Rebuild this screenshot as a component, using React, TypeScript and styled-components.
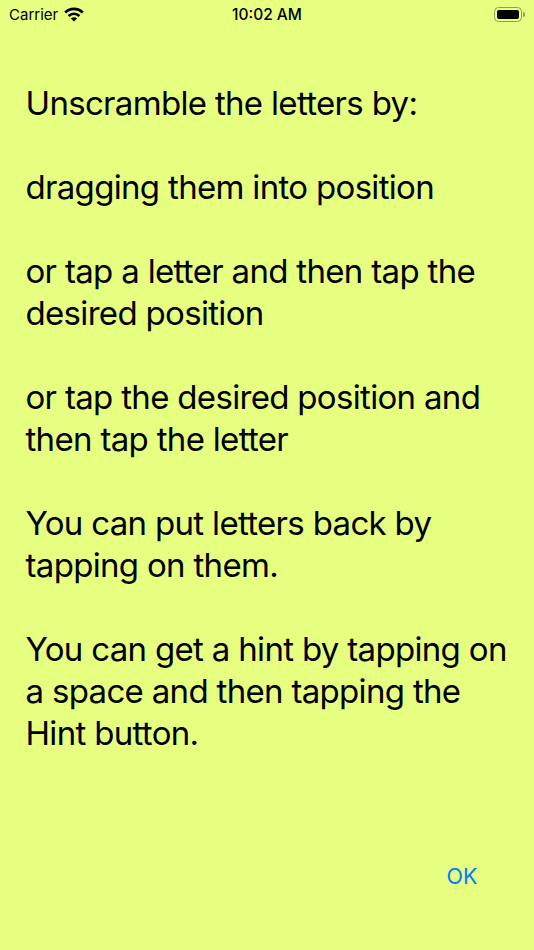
import styled, { createGlobalStyle } from "styled-components";

const GlobalStyle = createGlobalStyle`
  html, body {
    margin: 0;
    padding: 0;
    background: #e6ff80;
  }
`;

const lines = [
  ["Unscramble the letters by:"],
  ["dragging them into position"],
  ["or tap a letter and then tap the", "desired position"],
  ["or tap the desired position and", "then tap the letter"],
  ["You can put letters back by", "tapping on them."],
  ["You can get a hint by tapping on", "a space and then tapping the", "Hint button."],
];

const App = () => {
  return (
    <Screen>
      <GlobalStyle />
      <StatusBar>
        <Left>
          <span>Carrier</span>
          <svg width="20" height="15" viewBox="0 0 20 15">
            <g fill="none" stroke="#000" strokeWidth="2.7">
              <path d="M1.2 5.4C6.2.7 13.800.7 18.800 5.400" />
              <path d="M4.600 8.900C7.700 6 12.300 6 15.400 8.900" />
            </g>
            <path d="M6.900 11.500C8.700 9.900 11.300 9.900 13.100 11.500L10 14.600Z" fill="#000" />
          </svg>
        </Left>
        <Time>10:02 AM</Time>
        <Battery>
          <BatteryBody>
            <BatteryFill />
          </BatteryBody>
          <BatteryCap />
        </Battery>
      </StatusBar>
      <Message>
        {lines.map((group, i) => (
          <p key={i}>
            {group.map((line) => (
              <span key={line}>{line}</span>
            ))}
          </p>
        ))}
      </Message>
      <Footer>
        <OkButton>OK</OkButton>
      </Footer>
    </Screen>
  );
};

export default App;

const Screen = styled.div`
  display: flex;
  flex-direction: column;
  width: 534px;
  height: 950px;
  overflow: hidden;
  background: #e6ff80;
  color: #000;
  font-family: Inter, "Liberation Sans", sans-serif;
`;

const StatusBar = styled.div`
  display: grid;
  grid-template-columns: 1fr auto 1fr;
  align-items: center;
  height: 28px;
  padding: 0 9px;
  font-size: 15px;
`;

const Left = styled.div`
  display: flex;
  align-items: center;
  gap: 6px;
`;

const Time = styled.div`
  font-size: 15.500px;
  font-weight: 500;
`;

const Battery = styled.div`
  display: flex;
  align-items: center;
  justify-content: flex-end;
`;

const BatteryBody = styled.div`
  box-sizing: border-box;
  width: 28px;
  height: 15px;
  padding: 2px;
  border: 1.500px solid #8f9f50;
  border-radius: 4.500px;
`;

const BatteryFill = styled.div`
  height: 100%;
  background: #000;
  border-radius: 2px;
`;

const BatteryCap = styled.div`
  width: 2px;
  height: 5px;
  margin-left: 1px;
  background: #8f9f50;
  border-radius: 0 2px 2px 0;
`;

const Message = styled.div`
  display: flex;
  flex-direction: column;
  gap: 42px;
  padding: 54px 25.500px 0;
  font-size: 33px;
  line-height: 42px;
  letter-spacing: -0.680px;

  p {
    margin: 0;
  }

  span {
    display: block;
    white-space: nowrap;
  }
`;

const Footer = styled.div`
  display: flex;
  justify-content: flex-end;
  margin-top: auto;
  padding: 0 56.500px 61px 0;
`;

const OkButton = styled.button`
  padding: 0;
  border: 0;
  background: none;
  color: #007aff;
  font-family: inherit;
  font-size: 21.500px;
`;
